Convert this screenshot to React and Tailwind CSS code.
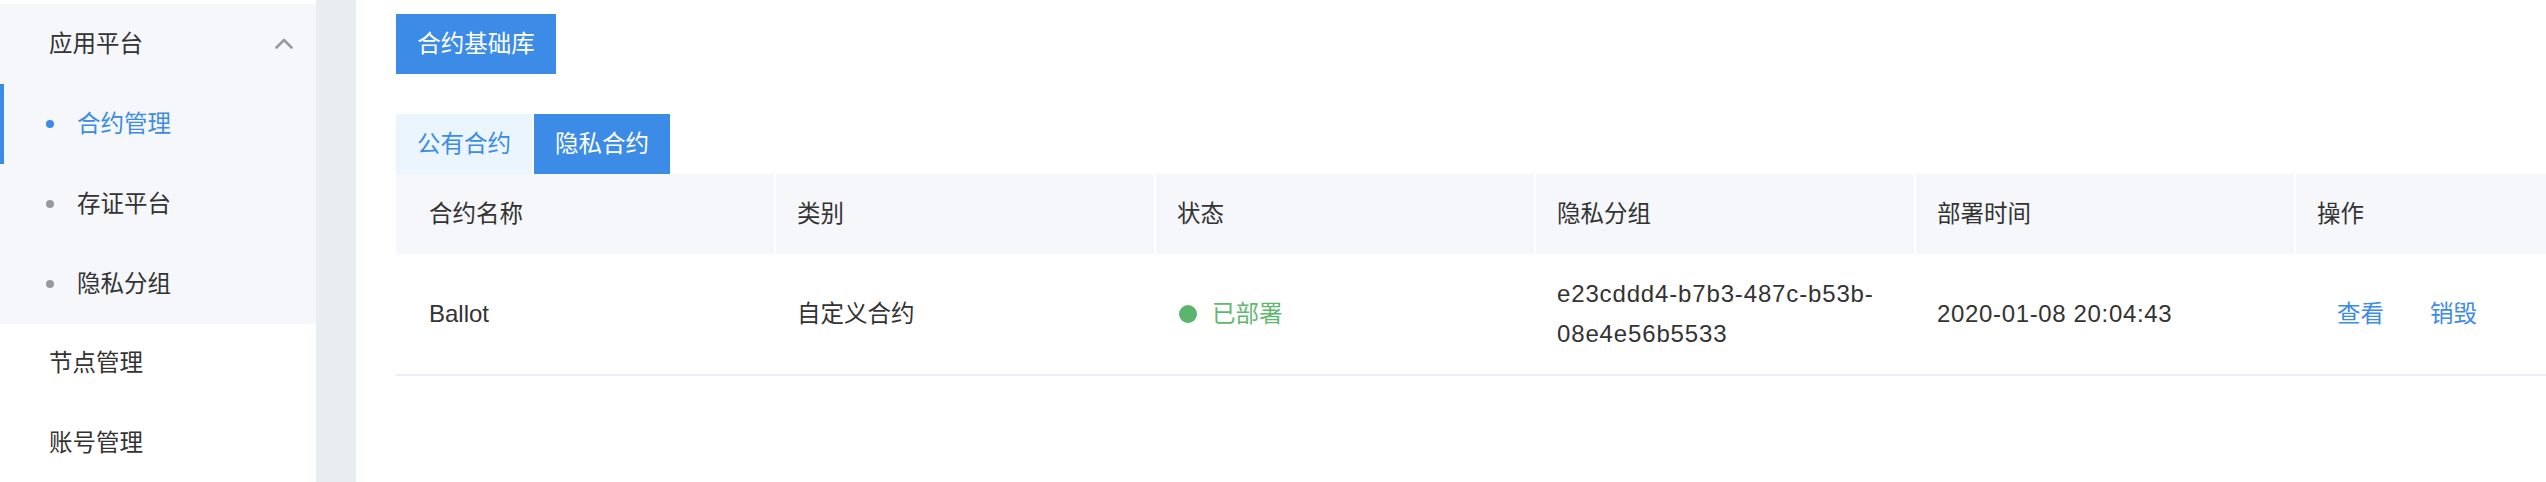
import React from "react";

const subMenus = [
    { label: "合约管理", active: true },
    { label: "存证平台", active: false },
    { label: "隐私分组", active: false },
];

const columns = ["合约名称", "类别", "状态", "隐私分组", "部署时间", "操作"];

function ChevronUp() {
    return (
        <svg width="18" height="11" viewBox="0 0 18 11" fill="none">
            <polyline points="1.5,9.5 9,2 16.5,9.5" stroke="#9a9a9a" strokeWidth="2.6" strokeLinecap="round" strokeLinejoin="round" />
        </svg>
    );
}

function Sidebar() {
    return (
        <aside className="w-[316px] shrink-0 flex flex-col bg-white text-[23.5px] text-[#333]">
            <div className="h-[4px]" />
            <div className="bg-[#f5f7fa]">
                <div className="h-[80px] flex items-center justify-between pl-[49px] pr-[23px]">
                    <span className="leading-[40px]">应用平台</span>
                    <ChevronUp />
                </div>
                {subMenus.map((item, index) => (
                    <div
                        key={index}
                        className={`h-[80px] flex items-center gap-x-[23px] pl-[42px] border-l-4 ${item.active ? "border-[#3c8ce7] text-[#3c8ce7]" : "border-transparent"}`}
                    >
                        <span className={`size-[8px] rounded-full ${item.active ? "bg-[#3c8ce7]" : "bg-[#9a9a9a]"}`} />
                        <span className="leading-[40px]">{item.label}</span>
                    </div>
                ))}
            </div>
            <div className="h-[80px] flex items-center pl-[49px]">
                <span className="leading-[40px]">节点管理</span>
            </div>
            <div className="h-[80px] flex items-center pl-[49px]">
                <span className="leading-[40px]">账号管理</span>
            </div>
        </aside>
    );
}

function ContractTable() {
    const cell = "h-[120px] flex items-center pl-[21px] pr-[21px]";
    return (
        <div className="w-[2278px] text-[#333]">
            <div className="grid grid-cols-[repeat(6,378px)] gap-x-[2px] text-[23.5px]">
                {columns.map((col, index) => (
                    <div
                        key={index}
                        className={`h-[80px] flex items-center bg-[#f5f7fa] ${index === 0 ? "pl-[33px]" : "pl-[21px]"}`}
                    >
                        <span className="leading-[40px]">{col}</span>
                    </div>
                ))}
            </div>
            <div className="grid grid-cols-[repeat(6,378px)] gap-x-[2px] border-b-2 border-[#ebeef5]">
                <div className={`${cell} pl-[33px] text-[24px] leading-[40px]`}>Ballot</div>
                <div className={`${cell} text-[23.5px] leading-[40px]`}>自定义合约</div>
                <div className={`${cell} text-[23.5px] leading-[40px] text-[#5fb86f]`}>
                    <span className="size-[18px] rounded-full bg-[#5cb56c] ml-[2px] mr-[15px]" />
                    已部署
                </div>
                <div className={`${cell} text-[24px] leading-[40px] tracking-[0.85px]`}>
                    <span>
                        e23cddd4-b7b3-487c-b53b-
                        <br />
                        08e4e56b5533
                    </span>
                </div>
                <div className={`${cell} text-[24px] leading-[40px] tracking-[0.65px]`}>2020-01-08 20:04:43</div>
                <div className={`${cell} text-[23.5px] leading-[40px] text-[#3c8ce7]`}>
                    <span className="ml-[20px]">查看</span>
                    <span className="ml-[46px]">销毁</span>
                </div>
            </div>
        </div>
    );
}

export default function App() {
    return (
        <div
            className="flex w-[2546px] h-[482px] overflow-hidden bg-white"
            style={{ fontFamily: '"Liberation Sans", "Noto Sans CJK SC", sans-serif' }}
        >
            <Sidebar />
            <div className="w-[40px] shrink-0 bg-[#e9ecf0]" />
            <main className="flex-1 min-w-0 overflow-hidden pl-[40px] pt-[14px]">
                <button className="w-[160px] h-[60px] bg-[#3c8ce7] text-white text-[23.5px] leading-[40px]">
                    合约基础库
                </button>
                <div className="mt-[40px] flex gap-x-[2px]">
                    <div className="w-[136px] h-[60px] flex items-center justify-center bg-[#ebf5fe] text-[#3c8ce7] text-[23.5px] leading-[40px]">
                        公有合约
                    </div>
                    <div className="w-[136px] h-[60px] flex items-center justify-center bg-[#3c8ce7] text-white text-[23.5px] leading-[40px]">
                        隐私合约
                    </div>
                </div>
                <ContractTable />
            </main>
        </div>
    );
}
